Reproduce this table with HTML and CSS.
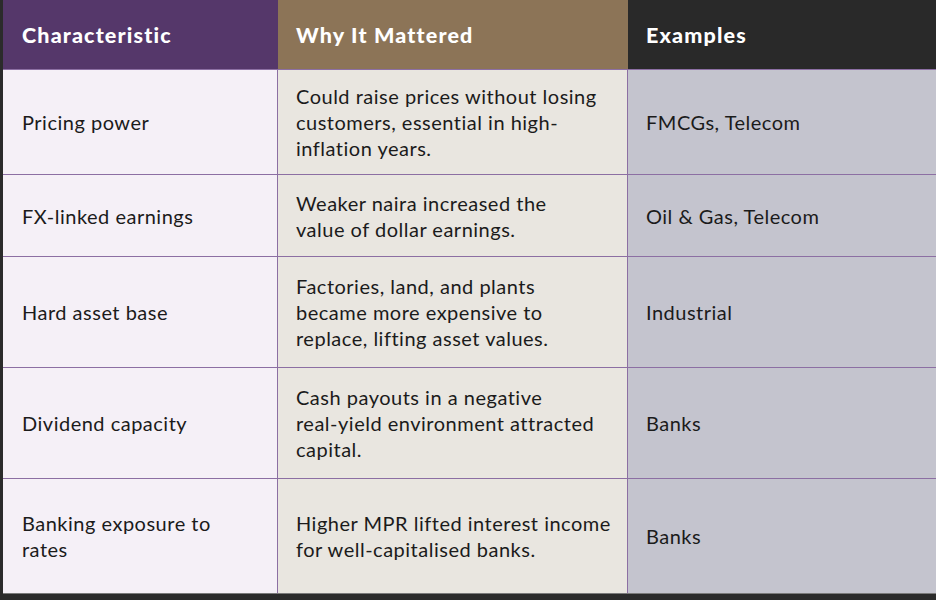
FILE: index.html
```html
<!DOCTYPE html>
<html lang="en">
<head>
<meta charset="utf-8">
<title>Characteristics</title>
<link rel="stylesheet" href="styles.css">
</head>
<body>
<div class="frame">
  <div class="table">
    <div class="th c1">Characteristic</div>
    <div class="th c2">Why It Mattered</div>
    <div class="th c3">Examples</div>

    <div class="td c1 r1">Pricing power</div>
    <div class="td c2 r1"><p>Could raise prices without losing<br>customers, essential in high-<br>inflation years.</p></div>
    <div class="td c3 r1">FMCGs, Telecom</div>

    <div class="td c1 r2">FX-linked earnings</div>
    <div class="td c2 r2"><p>Weaker naira increased the<br>value of dollar earnings.</p></div>
    <div class="td c3 r2">Oil &amp; Gas, Telecom</div>

    <div class="td c1 r3">Hard asset base</div>
    <div class="td c2 r3"><p>Factories, land, and plants<br>became more expensive to<br>replace, lifting asset values.</p></div>
    <div class="td c3 r3">Industrial</div>

    <div class="td c1 r4">Dividend capacity</div>
    <div class="td c2 r4"><p>Cash payouts in a negative<br>real-yield environment attracted<br>capital.</p></div>
    <div class="td c3 r4">Banks</div>

    <div class="td c1 r5"><p>Banking exposure to<br>rates</p></div>
    <div class="td c2 r5"><p>Higher MPR lifted interest income<br>for well-capitalised banks.</p></div>
    <div class="td c3 r5">Banks</div>
  </div>
</div>
</body>
</html>
```

FILE: styles.css
```css
* { box-sizing: border-box; }
html, body { margin: 0; padding: 0; }
body {
  width: 936px;
  height: 600px;
  background: #2b2b2b;
  font-family: "Lato", "Liberation Sans", sans-serif;
  color: #1b1b1b;
  overflow: hidden;
}
p { margin: 0; }
.frame {
  padding-left: 3px;
}
.table {
  display: grid;
  grid-template-columns: 275px 350px 1fr;
  border-bottom: 1px solid #7a7a7a;
}
.th {
  height: 69px;
  display: flex;
  align-items: center;
  padding: 0 18px 0 19px;
  color: #ffffff;
  font-weight: 900;
  font-size: 21.5px;
  letter-spacing: 1.15px;
}
.th.c1 { background: #55376a; }
.th.c2 { background: #8c7457; padding-left: 18px; }
.th.c3 { background: #292929; padding-left: 18px; }

.td {
  display: flex;
  align-items: center;
  font-size: 20px;
  line-height: 26px;
  letter-spacing: 0.5px;
  white-space: nowrap;
  padding: 0 18px;
  border-top: 1px solid #8c6fa3;
}
.td.c1 { background: #f5f0f7; border-right: 1px solid #8c6fa3; padding-left: 19px; }
.td.c2 { background: #e9e6e0; border-right: 1px solid #8c6fa3; padding-right: 8px; }
.td.c3 { background: #c4c4ce; }

.r1 { height: 105px; }
.r2 { height: 82px; }
.r3 { height: 111px; }
.r4 { height: 111px; }
.r5 { height: 115px; }
```
